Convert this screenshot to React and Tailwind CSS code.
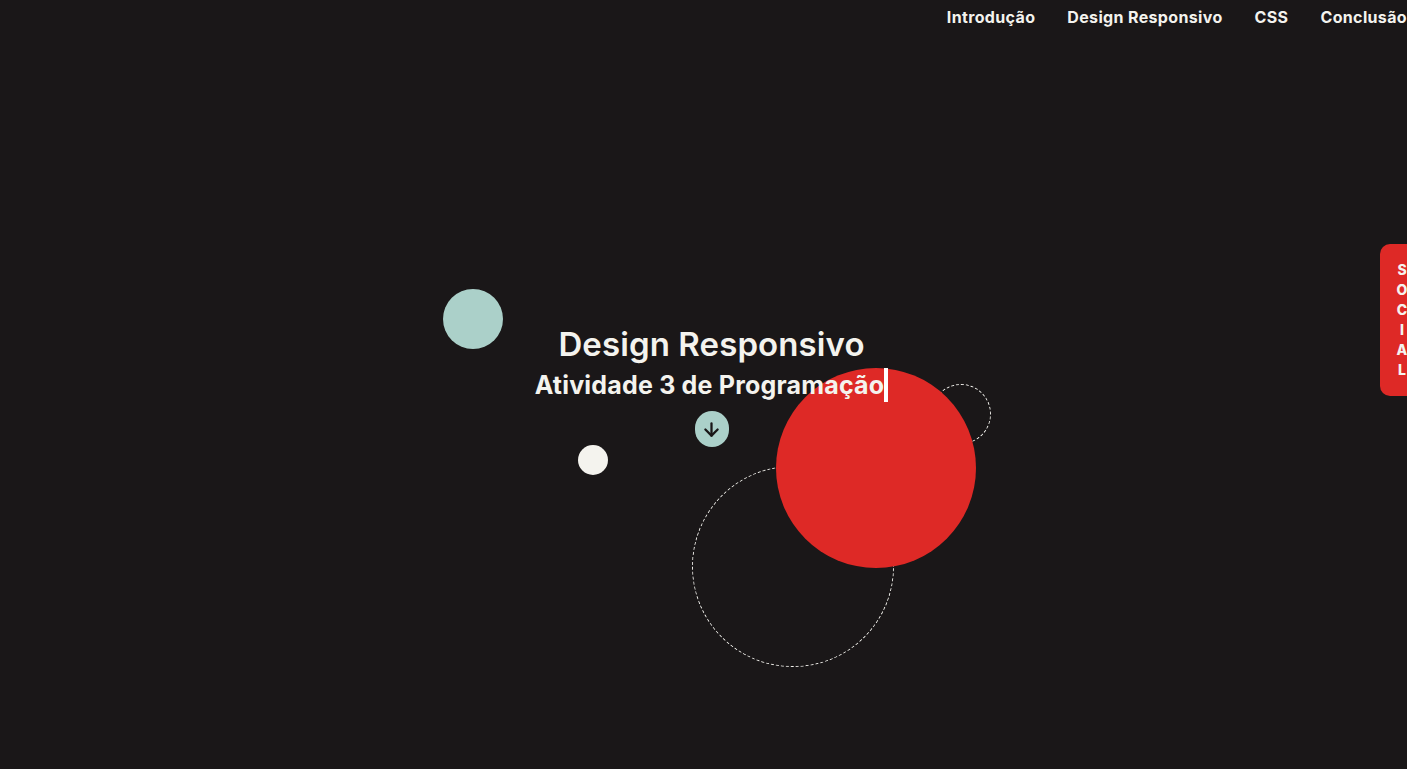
import React from "react";
import { ArrowDown } from "lucide-react";

const links = ["Introdução", "Design Responsivo", "CSS", "Conclusão"];
const social = ["S", "O", "C", "I", "A", "L"];

export default function App() {
  return (
    <div className="relative h-[769px] overflow-hidden bg-[#1a1718] font-['Inter','Liberation_Sans',sans-serif] text-[#f4f3ee]">
      {/* nav */}
      <nav className="flex h-[34px] items-center justify-end">
        <ul className="flex gap-8 text-[16px] font-bold tracking-[0.35px]">
          {links.map((l) => (
            <li key={l}>
              <a href="#">{l}</a>
            </li>
          ))}
        </ul>
      </nav>

      {/* circles */}
      <div className="absolute left-[443px] top-[289px] h-[60px] w-[60px] rounded-full bg-[#abd0c9]"></div>
      <div className="absolute left-[578px] top-[445px] h-[30px] w-[30px] rounded-full bg-[#f4f3ee]"></div>
      <div className="absolute left-[692px] top-[466px] h-[201px] w-[202px] rounded-full border border-dashed border-[#f4f3ee]"></div>
      <div className="absolute left-[931px] top-[384px] h-[60px] w-[60px] rounded-full border border-dashed border-[#f4f3ee]"></div>
      <div className="absolute left-[776px] top-[368px] h-[200px] w-[200px] rounded-full bg-[#de2926]"></div>

      {/* hero */}
      <main className="relative flex flex-col items-center pl-4 pt-[286px]">
        <h1 className="text-[33px] font-semibold leading-[48px] tracking-[0.1px]">Design Responsivo</h1>
        <h2 className="text-[25px] font-bold leading-[34px] tracking-[0.2px]">
          <span className="inline-block border-r-4 border-white">Atividade 3 de Programação</span>
        </h2>
        <a href="#" className="mt-[9px] flex h-9 w-[34px] items-center justify-center rounded-full bg-[#abd0c9] text-[#1a1718]">
          <ArrowDown size={21} strokeWidth={2.6} />
        </a>
      </main>

      {/* social tab */}
      <div className="absolute left-[1380px] top-[244px] flex h-[152px] w-11 flex-col items-center justify-center rounded-[10px] bg-[#de2926] text-sm font-extrabold leading-5">
        {social.map((c) => (
          <span key={c}>{c}</span>
        ))}
      </div>
    </div>
  );
}
